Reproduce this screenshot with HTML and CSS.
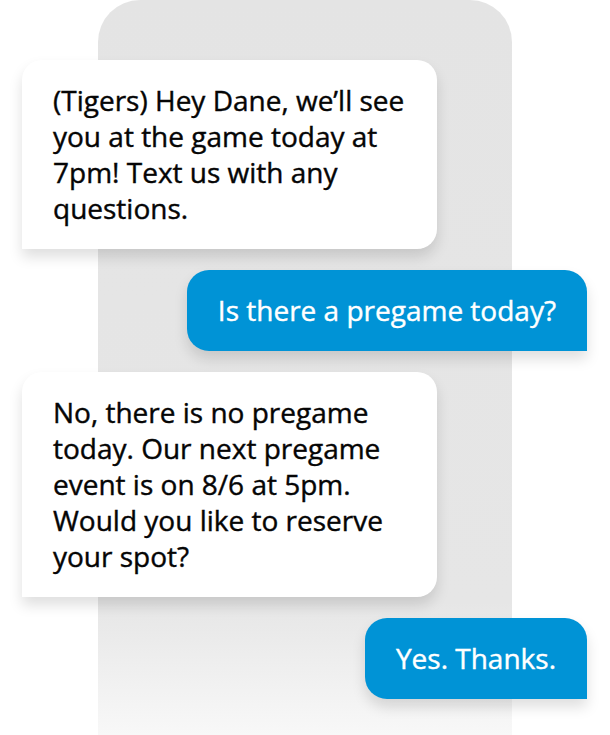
FILE: index.html
```html
<!DOCTYPE html>
<html lang="en">
  <head>
    <meta charset="UTF-8" />
    <meta name="viewport" content="width=device-width, initial-scale=1.0" />
    <title>Text Conversation</title>
    <link rel="stylesheet" href="styles.css">
  </head>
  <body>
    <div class="stage">
      <!-- Phone backdrop behind the bubbles -->
      <div class="phone"></div>

      <div class="chat">
        <div class="bubble incoming">
          (Tigers) Hey Dane, we’ll see you at the game today at 7pm! Text us with any questions.
        </div>
        <div class="bubble outgoing">Is there a pregame today?</div>
        <div class="bubble incoming">
          No, there is no pregame today. Our next pregame event is on 8/6 at 5pm. Would you like to reserve your spot?
        </div>
        <div class="bubble outgoing">Yes. Thanks.</div>
      </div>
    </div>
  </body>
</html>
```

FILE: styles.css
```css
body {
  margin: 0;
  background: #ffffff;
  font-family: "Open Sans", Arial, sans-serif;
}
.stage {
  position: relative;
  width: 610px;
  height: 735px;
  overflow: hidden;
}
.phone {
  position: absolute;
  left: 98px;
  top: 0;
  width: 414px;
  height: 735px;
  border-radius: 42px 42px 0 0;
  background: linear-gradient(to bottom, #e4e4e4 0%, #e6e6e6 82%, #f8f8f8 100%);
}
.chat {
  position: relative;
  display: flex;
  flex-direction: column;
  gap: 21px;
  padding: 60px 23px 0 22px;
}
.bubble {
  font-size: 28px;
  line-height: 36px;
  -webkit-text-stroke: 0.4px currentColor;
  box-shadow: 0 8px 14px rgba(0, 0, 0, 0.13);
}
.incoming {
  align-self: flex-start;
  width: 415px;
  box-sizing: border-box;
  padding: 22px 26px 23px 31px;
  background: #ffffff;
  color: #050505;
  border-radius: 20px 20px 20px 0;
}
.outgoing {
  align-self: flex-end;
  padding: 22px 31px 23px 31px;
  background: #0093d6;
  color: #ffffff;
  border-radius: 22px 22px 0 22px;
}
```
